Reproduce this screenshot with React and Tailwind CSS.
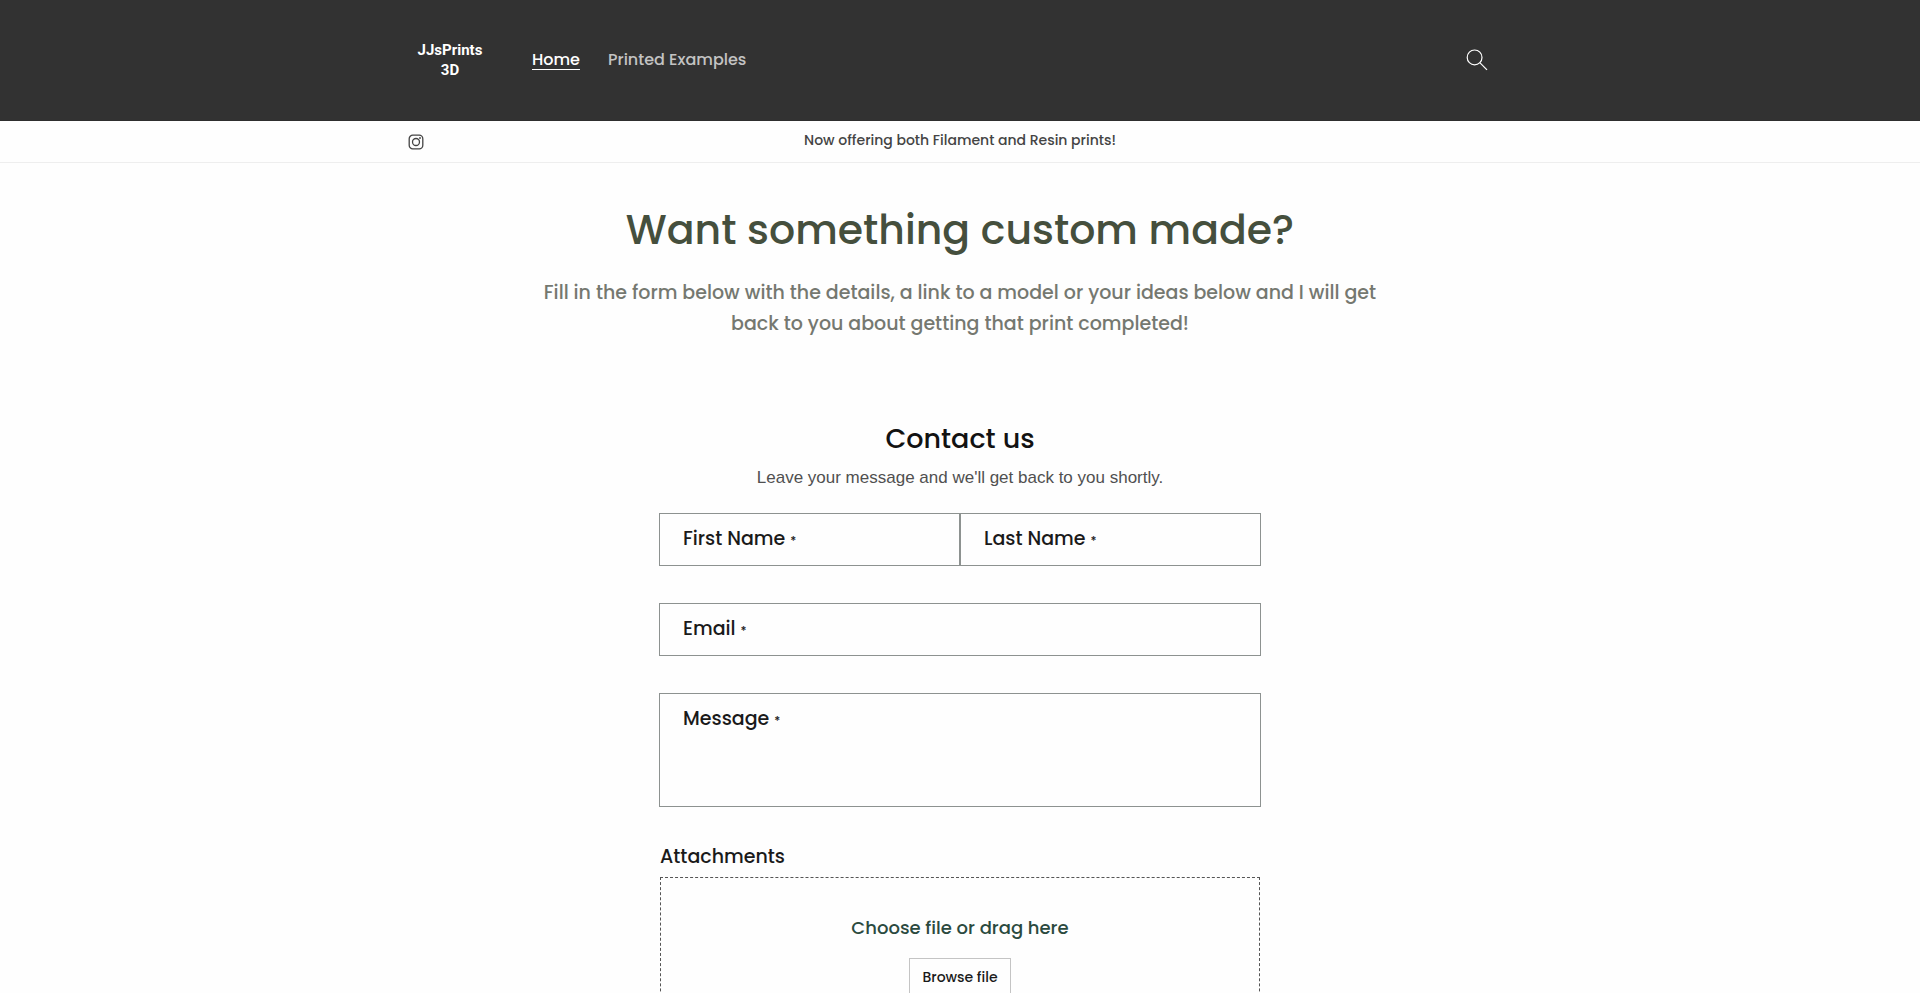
import { useState } from 'react';

function InstagramIcon() {
  return (
    <svg viewBox="0 0 16 16" className="h-4 w-4" fill="none" stroke="currentColor" strokeWidth="1.3" aria-hidden="true">
      <rect x="1.2" y="1.2" width="13.6" height="13.6" rx="3.6" />
      <circle cx="8" cy="8" r="3.5" />
      <circle cx="12" cy="4" r="0.9" fill="currentColor" stroke="none" />
    </svg>
  );
}

function SearchIcon() {
  return (
    <svg viewBox="0 0 22 22" className="h-[22px] w-[22px]" fill="none" stroke="currentColor" strokeWidth="1.2" aria-hidden="true">
      <circle cx="8.6" cy="8.4" r="7.4" />
      <path d="M13.8 13.6l7.2 7.2" />
    </svg>
  );
}

function FieldLabel({ htmlFor, children }) {
  return (
    <label htmlFor={htmlFor} className="pointer-events-none absolute top-3 left-6 text-[19px] leading-7 text-[#1a1a1a]">
      {children} <span className="text-xs">*</span>
    </label>
  );
}

export default function App() {
  const [formData, setFormData] = useState({
    firstName: '',
    lastName: '',
    email: '',
    message: '',
  });

  const handleChange = (e) => {
    setFormData({ ...formData, [e.target.name]: e.target.value });
  };

  const handleSubmit = (e) => {
    e.preventDefault();
  };

  return (
    <div className="min-h-screen bg-[#fefefe] font-['Poppins','Inter',sans-serif] font-medium">
      <header className="border-b border-[#2e2e2e] bg-[#323232] text-white">
        <div className="mx-auto flex max-w-[1120px] items-center py-9">
          <a href="#" className="w-[100px] py-1 text-center font-['Roboto',sans-serif] text-[15px] leading-5 font-bold">
            JJsPrints
            <br />
            3D
          </a>
          <nav className="ml-8 flex gap-7 text-base leading-6">
            <a href="#" className="underline underline-offset-4">Home</a>
            <a href="#" className="text-[#c3c3c3]">Printed Examples</a>
          </nav>
          <button type="button" aria-label="Search" className="mr-8 ml-auto">
            <SearchIcon />
          </button>
        </div>
      </header>

      <div className="border-b border-[#eeeeee] text-[#444444]">
        <div className="mx-auto grid h-[41px] max-w-[1120px] grid-cols-[1fr_auto_1fr] items-center px-2">
          <a href="#" aria-label="Instagram" className="w-4">
            <InstagramIcon />
          </a>
          <p className="pb-1 text-sm leading-5">Now offering both Filament and Resin prints!</p>
        </div>
      </div>

      <main>
        <section className="mx-auto max-w-[860px] pt-9 text-center">
          <h1 className="text-[41px] leading-[62px] text-[#454f3d]">Want something custom made?</h1>
          <p className="mt-4 text-[19px] leading-[31px] text-[#757870]">
            Fill in the form below with the details, a link to a model or your ideas below and I will get back to you about getting that print completed!
          </p>
        </section>

        <section className="mx-auto max-w-[602px] pt-[82px]">
          <h2 className="text-center text-[27px] leading-9 text-[#121212]">Contact us</h2>
          <p className="mt-2 text-center font-['Liberation_Sans',sans-serif] text-[17px] leading-[26px] font-normal text-[#505050]">
            Leave your message and we'll get back to you shortly.
          </p>

          <form onSubmit={handleSubmit} className="mt-[22px]">
            <div className="grid grid-cols-2">
              <div className="relative">
                <input
                  id="firstName"
                  name="firstName"
                  type="text"
                  value={formData.firstName}
                  onChange={handleChange}
                  className="block h-[53px] w-full border border-[#8d9290] px-6"
                />
                <FieldLabel htmlFor="firstName">First Name</FieldLabel>
              </div>
              <div className="relative">
                <input
                  id="lastName"
                  name="lastName"
                  type="text"
                  value={formData.lastName}
                  onChange={handleChange}
                  className="block h-[53px] w-full border border-[#8d9290] px-6"
                />
                <FieldLabel htmlFor="lastName">Last Name</FieldLabel>
              </div>
            </div>

            <div className="relative mt-[37px]">
              <input
                id="email"
                name="email"
                type="email"
                value={formData.email}
                onChange={handleChange}
                className="block h-[53px] w-full border border-[#8d9290] px-6"
              />
              <FieldLabel htmlFor="email">Email</FieldLabel>
            </div>

            <div className="relative mt-[37px]">
              <textarea
                id="message"
                name="message"
                value={formData.message}
                onChange={handleChange}
                className="block h-[114px] w-full resize-none border border-[#8d9290] px-6 pt-10"
              />
              <FieldLabel htmlFor="message">Message</FieldLabel>
            </div>

            <div className="mt-9 px-px">
              <label htmlFor="attachments" className="block text-[19px] leading-7 text-[#1a1a1a]">Attachments</label>
              <div className="mt-1.5 flex flex-col items-center border border-dashed border-[#555555] pt-9 pb-10">
                <p className="text-lg leading-7 text-[#2b4a3f]">Choose file or drag here</p>
                <input id="attachments" type="file" className="sr-only" />
                <button type="button" className="mt-4 border border-[#c4c4c4] px-3 py-1.5 text-sm leading-6 text-[#1a1a1a]">
                  Browse file
                </button>
              </div>
            </div>
          </form>
        </section>
      </main>
    </div>
  );
}
